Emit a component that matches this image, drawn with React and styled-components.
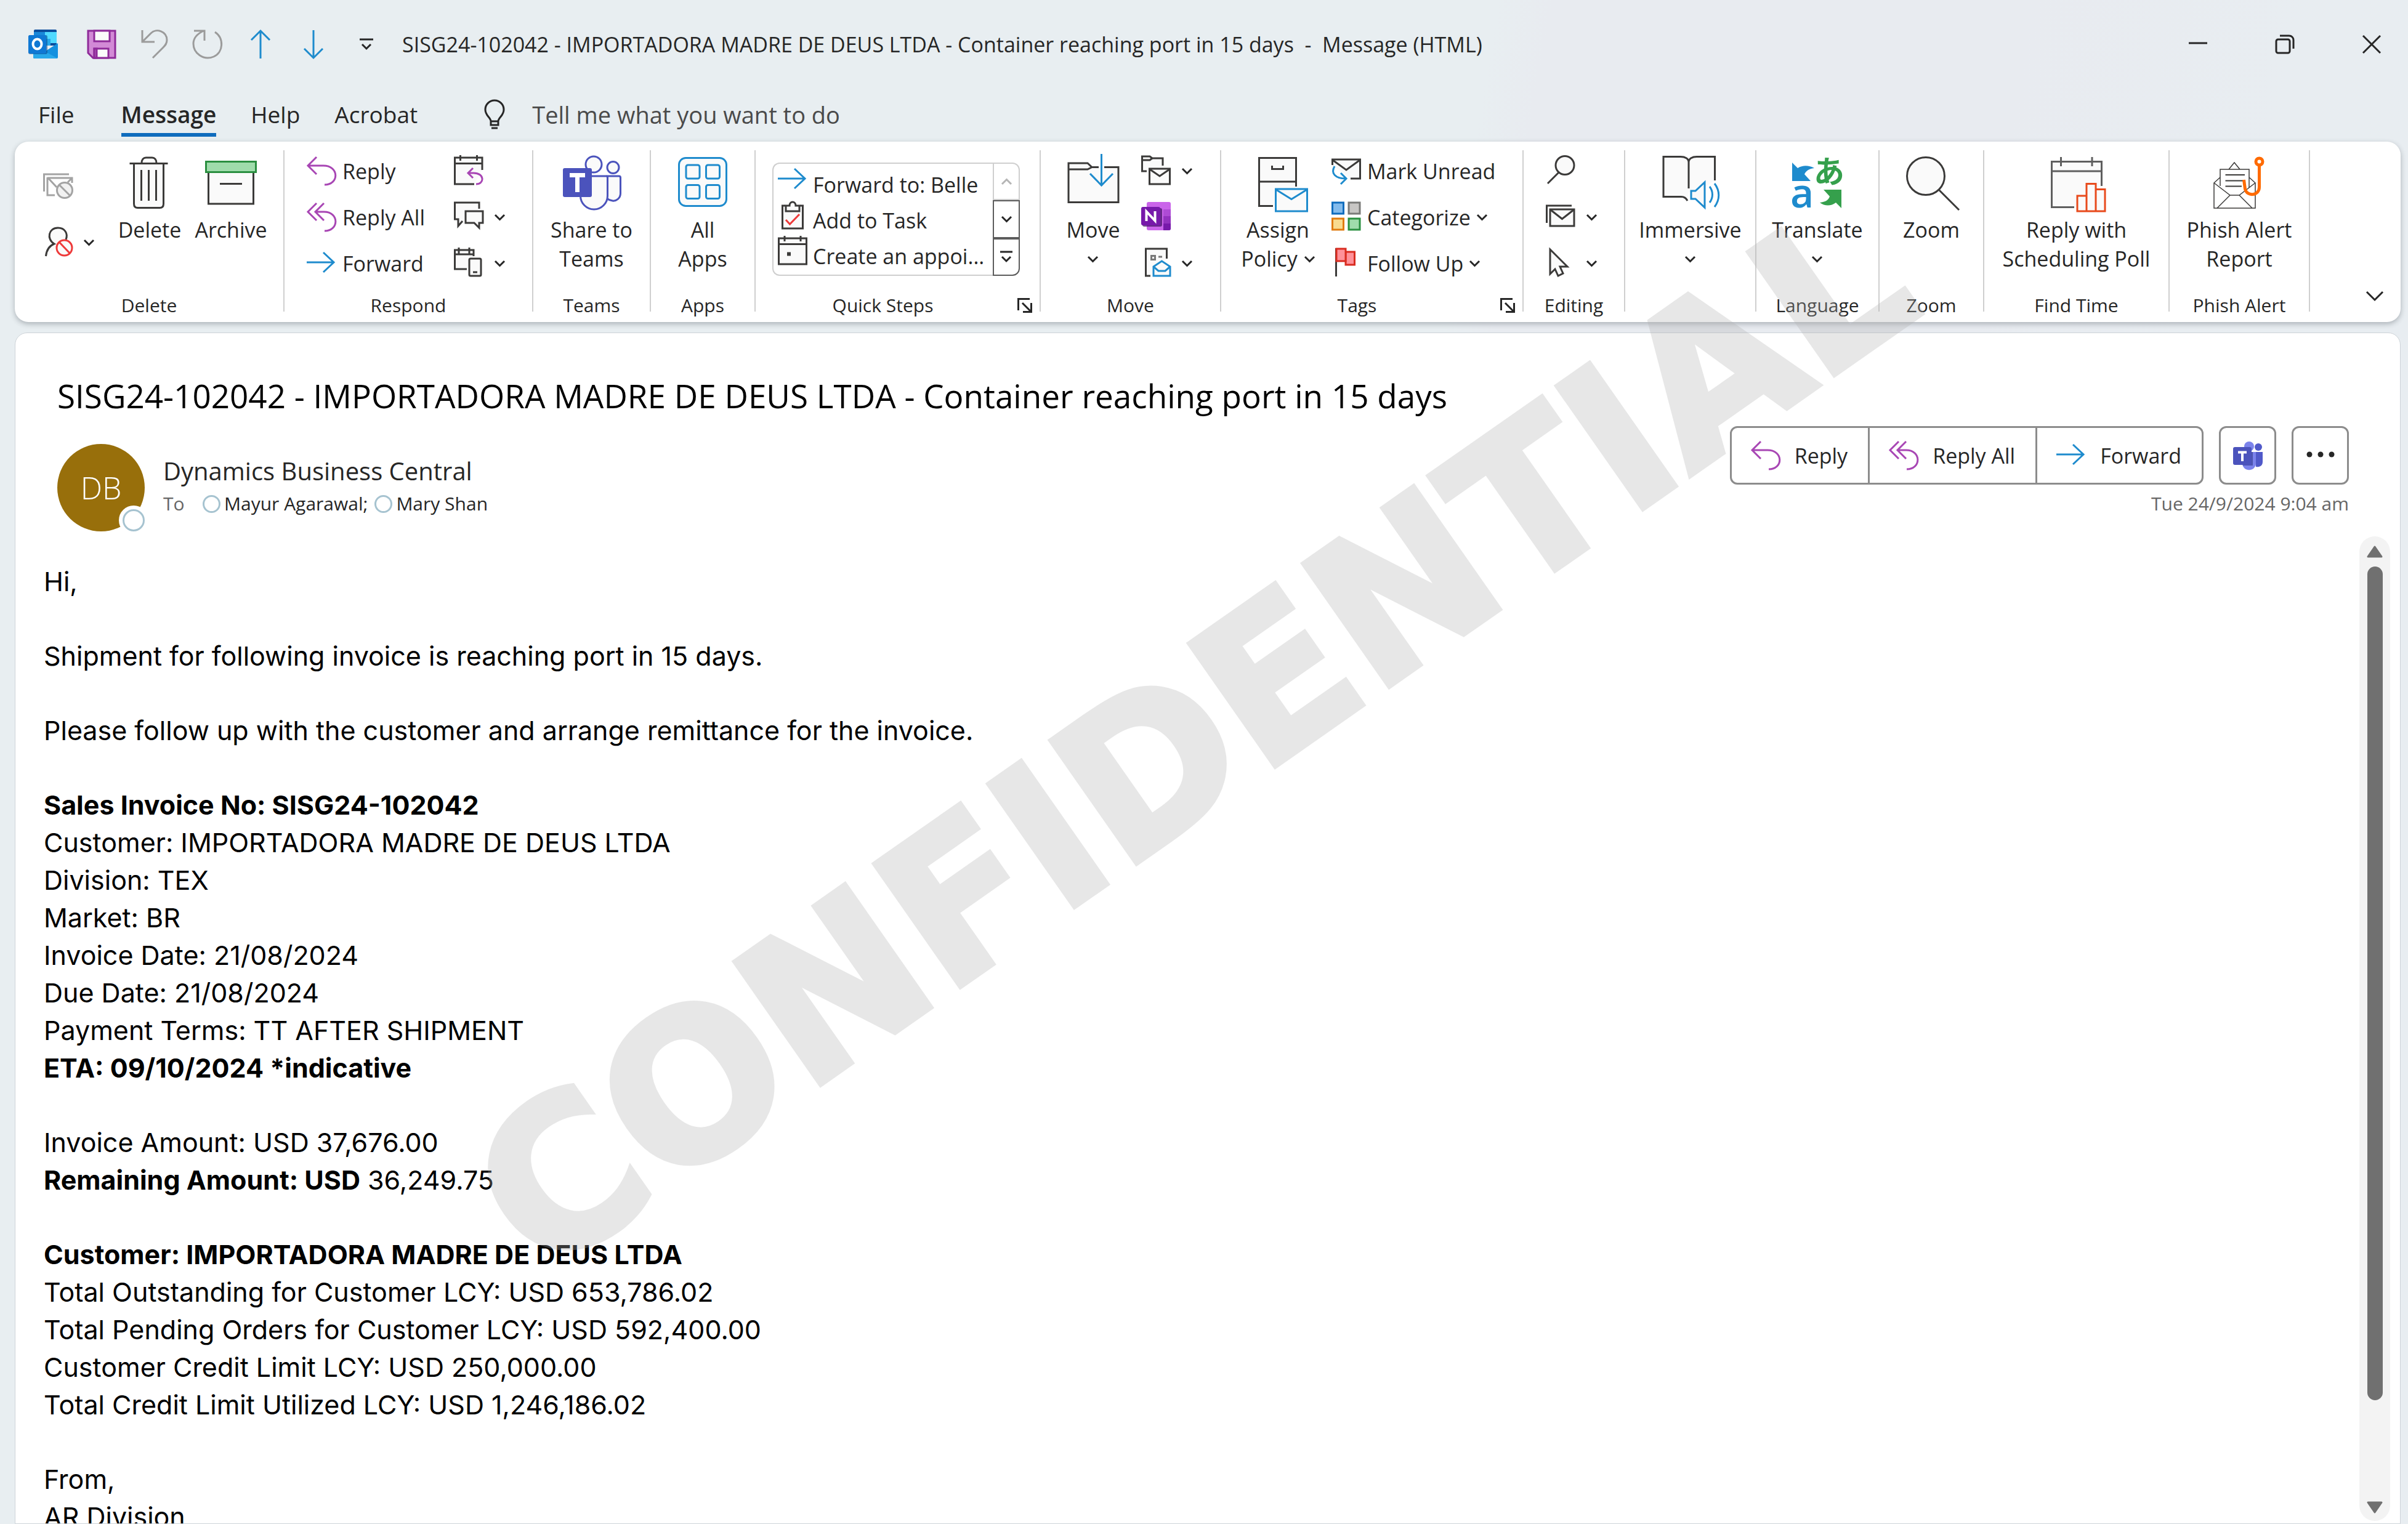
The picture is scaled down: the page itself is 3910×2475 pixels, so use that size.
import React from "react";
import styled, { createGlobalStyle, css } from "styled-components";

const UI = `"Open Sans", "Noto Sans", sans-serif`;
const BODY = `Inter, Roboto, sans-serif`;
const INK = "#262626";
const LINE = "#3b3a39";
const PAPER = "#fafafa";
const BLUE = "#1e8bcd";
const PURPLE = "#a846b4";
const TEAMS = "#4b53bc";

const Global = createGlobalStyle`
  *, *::before, *::after { box-sizing: border-box; }
  body { margin: 0; background: #e8edf1; font-family: ${UI}; color: ${INK}; }
  button, input { font: inherit; color: inherit; background: none; border: 0; padding: 0; margin: 0; }
  svg { display: block; overflow: visible; flex: none; }
  h1, h2, p, ul { margin: 0; padding: 0; font-weight: 400; }
`;

/* ---------- window ---------- */

const Window = styled.div`
  position: relative;
  display: flex;
  flex-direction: column;
  height: 100vh;
  overflow: hidden;
  background: linear-gradient(100deg, #e8eef1 0 56%, #e8ebf0 58% 76%, #e8edf1 86%);
`;

const TitleBar = styled.header`
  display: flex;
  align-items: center;
  height: 144px;
  padding-left: 46px;
`;

const QuickAccess = styled.div`
  display: flex;
  gap: 38px;
  padding-left: 47px;
`;

const IconButton = styled.button`
  display: grid;
  place-items: center;
  width: 48px;
  height: 48px;
`;

const WindowTitle = styled.h1`
  flex: 1;
  padding-left: 34px;
  font-size: 34px;
  line-height: 48px;
  white-space: pre;
`;

const WindowControls = styled.div`
  display: flex;
  gap: 23px;
`;

const ControlButton = styled.button`
  display: grid;
  place-items: center;
  width: 118px;
  height: 96px;
`;

/* ---------- tabs ---------- */

const TabRow = styled.nav`
  display: flex;
  align-items: flex-start;
  gap: 56px;
  padding: 12px 64px 8px 62px;
  font-size: 37px;
`;

const Tab = styled.button`
  height: 66px;
  line-height: 60px;
  border-bottom: 6px solid transparent;
  ${(p) => p.$first && css`margin-right: 20px;`}
  ${(p) => p.$active && css`
    font-weight: 600;
    background: linear-gradient(#0f6cbd, #0f6cbd) bottom / 100% 6px no-repeat border-box;
  `}
`;

const TellMe = styled.label`
  display: flex;
  align-items: center;
  gap: 44px;
  flex: 1;
  padding-left: 52px;
`;

const TellMeInput = styled.input`
  flex: 1;
  height: 60px;
  font-size: 38px;
  outline: none;
  &::placeholder { color: #4a4a4a; opacity: 1; }
`;

/* ---------- ribbon ---------- */

const Ribbon = styled.section`
  display: flex;
  margin: 0 12px 0 24px;
  padding-top: 10px;
  height: 293px;
  background: #fff;
  border-radius: 22px;
  box-shadow: 0 3px 8px rgba(40, 50, 60, 0.32);
`;

const Divider = styled.div`
  width: 2px;
  height: 262px;
  margin-top: 4px;
  background: #cfcfcf;
`;

const Group = styled.div`
  display: flex;
  flex-direction: column;
  width: ${(p) => p.$width}px;
`;

const GroupBody = styled.div`
  display: flex;
  height: 236px;
  padding-left: ${(p) => p.$inset || 0}px;
  gap: ${(p) => p.$gap || 0}px;
`;

const GroupFooter = styled.div`
  display: flex;
  align-items: center;
  height: 40px;
  font-size: 30px;
  line-height: 40px;
`;

const GroupLabel = styled.h2`
  flex: 1;
  font-size: 30px;
  text-align: center;
`;

const Launcher = styled.button`
  display: grid;
  place-items: center;
  width: 48px;
  height: 40px;
`;

const BigButton = styled.button`
  display: flex;
  flex-direction: column;
  align-items: center;
  gap: 8px;
  width: ${(p) => (p.$wide ? "100%" : "132px")};
  padding-top: 12px;
  font-size: 34px;
  line-height: 47px;
`;

const BigLabel = styled.span`
  display: flex;
  flex-direction: column;
  align-items: center;
`;

const LabelLine = styled.span`
  display: flex;
  align-items: center;
  justify-content: center;
  gap: 11px;
  min-height: 47px;
  white-space: nowrap;
`;

const Stack = styled.div`
  display: flex;
  flex-direction: column;
  width: ${(p) => (p.$width ? `${p.$width}px` : "auto")};
  padding-top: ${(p) => (p.$tall ? 16 : 0)}px;
`;

const SmallButton = styled.button`
  display: flex;
  align-items: center;
  gap: 10px;
  height: ${(p) => (p.$tall ? 92 : 75)}px;
  font-size: 34px;
  white-space: nowrap;
  ${(p) => p.$bare && css`gap: 18px;`}
`;

const CollapseButton = styled.button`
  display: grid;
  place-items: center;
  align-self: flex-end;
  width: 60px;
  height: 60px;
  margin: 0 12px 12px auto;
`;

/* ---------- quick steps gallery ---------- */

const Gallery = styled.div`
  display: flex;
  width: 402px;
  height: 184px;
  margin-top: 24px;
`;

const GalleryList = styled.div`
  flex: 1;
  padding: 2px 0 0 7px;
  border: 2px solid #cfcfcf;
  border-right: 0;
  border-radius: 12px 0 0 12px;
`;

const GalleryItem = styled.button`
  display: flex;
  align-items: flex-start;
  gap: 9px;
  height: 58px;
  font-size: 34px;
  line-height: 64px;
  white-space: nowrap;
`;

const GalleryScroll = styled.div`
  display: flex;
  flex-direction: column;
  width: 44px;
`;

const GalleryArrow = styled.button`
  flex: 1;
  display: grid;
  place-items: center;
  border: 2px solid ${(p) => (p.$off ? "#cfcfcf" : "#5c5c5c")};
  &:first-child { border-top-right-radius: 12px; }
  &:last-child { border-bottom-right-radius: 12px; }
`;

/* ---------- message ---------- */

const Message = styled.main`
  display: flex;
  flex-direction: column;
  flex: 1;
  min-height: 0;
  margin: 17px 12px 0 24px;
  background: #fff;
  border: 1px solid #cdd3d8;
  border-radius: 20px 20px 0 0;
`;

const Subject = styled.h2`
  padding: 66px 84px 0 68px;
  font-size: 53px;
  line-height: 72px;
  color: #000;
`;

const MessageHead = styled.div`
  display: flex;
  justify-content: space-between;
  padding: 13px 83px 8px 68px;
`;

const Sender = styled.div`
  display: flex;
  gap: 30px;
  padding-top: 29px;
`;

const Avatar = styled.div`
  position: relative;
  display: grid;
  place-items: center;
  width: 142px;
  height: 142px;
  border-radius: 50%;
  background: #986f0b;
  color: #fff;
  font-size: 50px;
  font-weight: 300;
`;

const Presence = styled.i`
  position: absolute;
  right: -6px;
  bottom: -6px;
  width: 48px;
  height: 48px;
  border: 6px solid #fff;
  border-radius: 50%;
  background: #fff;
  &::after {
    content: "";
    display: block;
    height: 100%;
    border: 3px solid #a6c3d0;
    border-radius: 50%;
  }
`;

const SenderText = styled.div`
  padding-top: 16px;
`;

const SenderName = styled.p`
  font-size: 40px;
  line-height: 56px;
`;

const Recipients = styled.p`
  display: flex;
  align-items: center;
  font-size: 30px;
  line-height: 50px;
`;

const ToLabel = styled.span`
  width: 64px;
  color: #666;
`;

const Person = styled.span`
  display: flex;
  align-items: center;
  gap: 6px;
  margin-right: 11px;
  &::before {
    content: "";
    width: 29px;
    height: 29px;
    border: 3px solid #a6c3d0;
    border-radius: 50%;
  }
`;

const HeadActions = styled.div`
  position: relative;
  z-index: 2;
  display: flex;
  flex-direction: column;
  align-items: flex-end;
  gap: 6px;
`;

const ActionRow = styled.div`
  display: flex;
  gap: 25px;
`;

const ActionGroup = styled.div`
  display: flex;
  height: 95px;
  background: #fff;
  border: 3px solid #8c8c8c;
  border-radius: 12px;
`;

const Action = styled.button`
  display: flex;
  align-items: center;
  gap: 23px;
  padding: 0 33px 0 31px;
  font-size: 34px;
  & + & { border-left: 3px solid #8c8c8c; }
`;

const SquareAction = styled.button`
  display: grid;
  place-items: center;
  width: 93px;
  height: 95px;
  background: #fff;
  border: 3px solid #8c8c8c;
  border-radius: 12px;
`;

const Sent = styled.time`
  font-size: 30px;
  line-height: 50px;
  color: #666;
`;

const Reading = styled.div`
  display: flex;
  flex: 1;
  min-height: 0;
  padding-right: 16px;
`;

const MailBody = styled.article`
  flex: 1;
  overflow: hidden;
  padding: 43px 0 0 46px;
  font-family: ${BODY};
  font-size: 43px;
  line-height: 61px;
  color: #000;
`;

const Paragraph = styled.p`
  margin-bottom: 60px;
`;

const Row = styled.span`
  display: block;
`;

const ScrollTrack = styled.div`
  display: flex;
  flex-direction: column;
  align-items: center;
  justify-content: space-between;
  gap: 14px;
  width: 50px;
  margin-bottom: 4px;
  padding: 15px 0 12px;
  border-radius: 25px;
  background: #f3f3f3;
`;

const ThumbLane = styled.div`
  flex: 1;
`;

const Thumb = styled.div`
  width: 25px;
  height: 90%;
  border-radius: 13px;
  background: #707070;
`;

const Watermark = styled.div`
  position: absolute;
  z-index: 1;
  left: 50%;
  top: 50%;
  font: bold 331px/1 "DejaVu Sans", sans-serif;
  color: #b2b2b2;
  -webkit-text-stroke: 10px #b2b2b2;
  opacity: 0.3;
  transform: translate(-50%, -50%) translate(-18px, -41px) rotate(-35deg);
  pointer-events: none;
  user-select: none;
`;

/* ---------- icons ---------- */

const S = ({ size = 48, children, stroke = LINE, w = 3 }) => (
  <svg width={size} height={size} viewBox={`0 0 ${size} ${size}`} fill="none" stroke={stroke} strokeWidth={w} aria-hidden="true">{children}</svg>
);
const L = ({ children, stroke = LINE, w = 3 }) => (
  <svg width="96" height="90" viewBox="0 0 96 90" fill="none" stroke={stroke} strokeWidth={w} aria-hidden="true">{children}</svg>
);

const Chevron = ({ up, color = INK }) => (
  <svg width="17" height="10" viewBox="0 0 17 10" fill="none" stroke={color} strokeWidth="3" aria-hidden="true">
    <path d={up ? "M1 9l7.5-7.5L16 9" : "M1 1l7.5 7.5L16 1"} />
  </svg>
);

const OutlookIcon = () => (
  <S stroke="none">
    <path d="M11 0h33a2 2 0 0 1 2 2v24H9V2a2 2 0 0 1 2-2z" fill="#0a4c9c" />
    <path d="M9 4h18v11H9z" fill="#1988d9" /><path d="M27 4h19v18H27z" fill="#50d9ff" />
    <path d="M9 15h18v11H9z" fill="#0f5fae" /><path d="M27 15h9v11h-9z" fill="#28a8ea" />
    <path d="M48 22L28 35 8 24v21a2 2 0 0 0 2 2h36a2 2 0 0 0 2-2z" fill="#1490df" />
    <path d="M8 25l39 21.500c-.500.500-1 .500-2 .500H10a2 2 0 0 1-2-2z" fill="#28a8ea" />
    <rect x="0" y="9" width="31" height="31" rx="3" fill="#0a4a8c" opacity=".6" />
    <rect x="0" y="9" width="29" height="30" rx="3" fill="#0f78d4" />
    <ellipse cx="14.500" cy="23.500" rx="7" ry="8" fill="none" stroke="#fff" strokeWidth="4" />
  </S>
);
const SaveIcon = () => (
  <S stroke="#8e2a99">
    <path d="M2 2h44v44H10l-8-8z" fill="#d28ad6" />
    <path d="M12 2h25v17H12z" fill="#fafafa" /><path d="M12 46V31h23v15z" fill="#fafafa" />
    <path d="M12 31h4v15h-4z" fill="#b35cbb" />
  </S>
);
const UndoIcon = () => (
  <S stroke="#9b9b9b"><path d="M4 1v19h20M4 20L18 6c9-9 26-3 26 11 0 6-3 9-6 12L21 46" /></S>
);
const RedoIcon = () => (
  <S stroke="#9b9b9b"><path d="M2 2h17v16M36 4c15 10 14 33-2 40-17 7-33-6-33-21C1 13 9 6 18 2" /></S>
);
const UpIcon = () => <S stroke={BLUE}><path d="M24 47V2M9 17L24 2l15 15" /></S>;
const DownIcon = () => <S stroke={BLUE}><path d="M24 1v45M9 31l15 15 15-15" /></S>;
const CustomizeIcon = () => <S stroke={INK}><path d="M13 16h22" /><path d="M17 24l7 7 7-7" /></S>;
const BulbIcon = () => (
  <svg width="34" height="48" viewBox="0 0 34 48" fill="none" stroke={INK} strokeWidth="3" aria-hidden="true">
    <path d="M11 41v-6c0-6-9-9-9-19a15 15 0 0 1 30 0c0 10-9 13-9 19v6zM11 35h12M12 46h10" />
  </svg>
);
const MinIcon = () => <S size={32} stroke={INK}><path d="M1 14h30" /></S>;
const RestoreIcon = () => (
  <S size={32} stroke={INK}><rect x="2" y="8" width="22" height="22" rx="3" /><path d="M8 2h15a7 7 0 0 1 7 7v14" /></S>
);
const CloseIcon = () => <S size={32} stroke={INK}><path d="M2 2l28 28M30 2L2 30" /></S>;

const JunkMailIcon = () => (
  <S stroke="#a3a3a3">
    <path d="M1.500 33V5H42" /><path d="M7 11h40v8M7 10v29h12M9 12l13 14M46 12l-6 6" />
    <circle cx="35" cy="31" r="12.500" fill="#f1f1f1" /><path d="M26 22l18 18" />
  </S>
);
const BlockPersonIcon = () => (
  <S>
    <path d="M4.500 46c1-10 6-17 13.500-20C5 18 9 0 24 0c11 0 17 9 13 19" fill={PAPER} />
    <circle cx="34.500" cy="32.500" r="12.500" fill={PAPER} stroke="#ee3a3a" /><path d="M26 23l17 18" stroke="#ee3a3a" />
  </S>
);
const TrashIcon = () => (
  <L>
    <path d="M22.500 14v65c0 4 2 6.500 6 6.500h36c4 0 6-2.500 6-6.500V14" fill={PAPER} />
    <path d="M15.500 13.500h62M35 13c0-6 3-9 7-9h10c4 0 7 3 7 9M34.500 24v50M46.500 24v50M58.500 24v50" />
  </L>
);
const ArchiveIcon = () => (
  <L>
    <path d="M11.500 27v52h73V27" fill={PAPER} /><path d="M30 46.500h36" />
    <rect x="7.500" y="10.500" width="81" height="17" fill="#9fdcab" stroke="#2a8f40" />
  </L>
);
const ReplyIcon = () => <S stroke={PURPLE}><path d="M16 1L2 15l14 14M2 15h25c26 0 26 31 2 31" /></S>;
const ReplyAllIcon = () => (
  <S stroke={PURPLE}><path d="M16 1L2 15l14 14M28 1L14 15l14 14M14 15h14c25 0 25 31 1 31" /></S>
);
const ForwardIcon = () => <S stroke={BLUE}><path d="M0 22h44M27 6l17 16-17 16" /></S>;
const MeetingReplyIcon = () => (
  <S>
    <path d="M46 22V2H1.500v43H33" fill={PAPER} /><path d="M1 11.500h45M10.500-2v9M37.500-2v9" />
    <path d="M31 19l-8 8 8 8M23 27h9c18 0 18 18 4 18" stroke={PURPLE} />
  </S>
);
const ChatIcon = () => (
  <S>
    <path d="M41 10V0H1.500v27H7v11l7-8" fill={PAPER} />
    <path d="M19 14h28v19h-6v8l-8-8H19z" fill={PAPER} />
  </S>
);
const MeetingPhoneIcon = () => (
  <S>
    <path d="M32 12V2H1.500v31H21" fill={PAPER} /><path d="M1 9h31M8-2v10M25-2v10" />
    <rect x="25" y="16" width="19" height="28" rx="2" fill={PAPER} /><path d="M31 38h7" />
  </S>
);
const TeamsIcon = () => (
  <L stroke={TEAMS}>
    <circle cx="51" cy="15" r="13" fill={PAPER} /><circle cx="82.500" cy="20" r="9.500" fill={PAPER} />
    <path d="M73 34h19c1.500 0 2.500 1 2.500 2.500V62c0 8-7 13-13 12-4-.500-7-2-9-4z" fill={PAPER} />
    <path d="M40 34h31c1.500 0 2.500 1 2.500 2.500V66a22 22 0 0 1-44 0V50z" fill={PAPER} />
    <rect x="1" y="21" width="47" height="47" rx="3" fill={TEAMS} stroke="none" />
    <path d="M12 32.500h25M24.500 32v28" stroke="#fff" strokeWidth="7" />
  </L>
);
const AppsIcon = () => (
  <L stroke={BLUE}>
    <rect x="9.500" y="4.500" width="77" height="78" rx="11" fill={PAPER} />
    {[[21, 16], [53.5, 16], [21, 48.5], [53.5, 48.5]].map(([x, y]) => (
      <rect key={`${x}-${y}`} x={x} y={y} width="22" height="22" rx="3" fill={PAPER} />
    ))}
  </L>
);
const ClipboardIcon = () => (
  <S>
    <path d="M12 8H7.500v37h33V8H36" fill={PAPER} />
    <path d="M13 17V8h6c0-8 10-8 10 0h6v9z" fill={PAPER} />
    <path d="M13 31l6.500 7L35 22" stroke="#ee3a3a" />
  </S>
);
const AppointmentIcon = () => (
  <S><rect x="1.500" y="3" width="45" height="42" fill={PAPER} /><path d="M1 12.500h45M11-1v9M37-1v9" /><path d="M15 28.500h6" strokeWidth="6" /></S>
);
const MoveIcon = () => (
  <L>
    <path d="M8 76.500V13h31l7 6.500h43v57z" fill={PAPER} stroke="none" />
    <path d="M57 19.500H46L39 13H8v63.500h81v-57H66M8 23h31l7-3.500" />
    <path d="M61.500-2v50M43 30l18.500 19L80 30" stroke={BLUE} />
  </L>
);
const FolderMailIcon = () => (
  <S>
    <path d="M9 24H1.500V0H14l4 3h17v12" fill={PAPER} /><path d="M1 6h13l4-3" />
    <rect x="13.500" y="20" width="33" height="25" fill={PAPER} /><path d="M14 21l16 11 16-11" />
  </S>
);
const OneNoteIcon = () => (
  <S stroke="none">
    <rect x="9" y="-1" width="39" height="46" rx="3" fill="#ca64ea" />
    <path d="M36 11h12v11H36z" fill="#ae4bd5" /><path d="M36 22h12v12H36z" fill="#9332bf" />
    <path d="M36 34h12v8a3 3 0 0 1-3 3h-9z" fill="#7719aa" />
    <rect x="2" y="9" width="32" height="30" rx="3" fill="#3c0f5c" opacity=".7" />
    <rect x="0" y="7" width="31" height="30" rx="3" fill="#7719aa" />
    <path d="M8.500 30V14.500l14 15V14" fill="none" stroke="#fff" strokeWidth="4" />
  </S>
);
const RulesIcon = () => (
  <S>
    <path d="M15 44H7.500V0h34v16" fill={PAPER} /><rect x="16.500" y="11.500" width="6" height="6" stroke="#777" /><path d="M28 13h6" stroke="#777" />
    <path d="M20 29l13.500-9L47 29v15H20z" fill={PAPER} stroke={BLUE} /><path d="M20 29l8 7h11l8-7" stroke={BLUE} />
  </S>
);
const PolicyIcon = () => (
  <L>
    <path d="M40 82.500H17.500v-78h60V51" fill={PAPER} /><path d="M17 43h61M38.500 17v5.500h18V17" />
    <rect x="44.500" y="55" width="51" height="36" fill={PAPER} stroke={BLUE} /><path d="M45 56l25 15.500L95 56" stroke={BLUE} />
  </L>
);
const UnreadIcon = () => (
  <S>
    <path d="M1.500 14V5h45v31H31" fill={PAPER} /><path d="M2 6l22 16L46 6" />
    <path d="M5 16c-7 12 2 20 18 20M15 27l9 9-9 9" stroke={BLUE} />
  </S>
);
const CategorizeIcon = () => (
  <S>
    <rect x="1.500" y="0" width="18" height="18" fill="#83bbec" stroke="#0f6cbd" />
    <rect x="28" y="0" width="18" height="18" fill="#c8c6c4" stroke="#7a7a78" />
    <rect x="1.500" y="26" width="18" height="18" fill="#f8db8f" stroke="#e07c10" />
    <rect x="28" y="26" width="18" height="18" fill="#9fdcab" stroke="#2a8f40" />
  </S>
);
const FlagIcon = () => (
  <S>
    <path d="M7.500-1v46" /><path d="M23 5h14.500v21H23z" fill="#ff9199" stroke="#d92c20" /><path d="M8 0h15v20H8z" fill="#ff9199" stroke="#d92c20" />
  </S>
);
const FindIcon = () => <S><circle cx="31" cy="14.500" r="15" fill={PAPER} /><path d="M21 26L3 44" /></S>;
const RelatedIcon = () => (
  <S><path d="M1.500 33V5H42" /><rect x="7" y="11" width="39" height="27" fill={PAPER} /><path d="M8 12l18.500 14.500L45 12" /></S>
);
const PointerIcon = () => <S><path d="M7 1v40l8-8 5 11 8-4-5-11h12z" fill={PAPER} /></S>;
const ImmersiveIcon = () => (
  <L>
    <path d="M43 74c-2-4-5-6.500-10-6.500H4v-65h28c7 0 13 3 13 8 0-5 6-8 13-8h29V41L60 60H45z" fill={PAPER} stroke="none" />
    <path d="M43 74c-2-4-5-6.500-10-6.500H4v-65h28c7 0 13 3 13 9V54M45 11.500c0-6 6-9 13-9h29.500V41" />
    <path d="M49 58h7l15-14v41L56 71h-7z" fill={PAPER} stroke={BLUE} />
    <path d="M79 51c6 8 6 18 0 26M87 46c9 12 9 26 0 38" stroke={BLUE} />
  </L>
);
const GlyphText = styled.text`
  font-family: ${(p) => (p.$cjk ? `"Noto Sans CJK JP"` : `"Open Sans"`)}, sans-serif;
  font-size: ${(p) => (p.$cjk ? 50 : 66)}px;
  font-weight: ${(p) => (p.$cjk ? 700 : 600)};
  stroke: none;
`;
const TranslateIcon = () => (
  <L stroke="none">
    <path d="M7 12l9 9c8-5 18-5 27 0-9 1-14 5-16 10l10 11H7z" fill={BLUE} />
    <path d="M58 56h29v30l-9-9c-8 6-18 6-26 0 9-1 14-4 16-10z" fill="#35a04c" />
    <GlyphText $cjk x="42" y="45" fill="#35a04c">あ</GlyphText>
    <GlyphText x="4" y="85" fill={BLUE}>a</GlyphText>
  </L>
);
const ZoomIcon = () => <L><circle cx="39" cy="34" r="30.500" fill={PAPER} /><path d="M60 56l33 33" /></L>;
const PollIcon = () => (
  <L stroke="#5f5f5f">
    <path d="M44 84.500H7.500V10.500h81V50" fill={PAPER} /><path d="M7 26h81M22.500 3v15M73 3v15" />
    <path d="M49 91V66h15v25zM64 91V46.500h15V91zM79 91V55.500h15V91z" fill={PAPER} stroke="#e84a1c" />
  </L>
);
const PhishIcon = () => (
  <L w="1">
    <path d="M31 23l9-11 9 11M17 36L7 45v41h67V45l-10-9M17 50V23h47v30" strokeWidth="1.500" />
    <path d="M7 45l26 20h15l26-20M12 86l21-21M69 86L48 65" strokeWidth="1.500" />
    <path d="M25.500 32H57M25.500 41.500H54M25.500 50.500H52" strokeWidth="2" />
    <circle cx="80.500" cy="10.500" r="5.500" stroke="#ff6a00" strokeWidth="5" />
    <path d="M80.500 17v35c0 14-20 16-23 3l-2-15" stroke="#ff6a00" strokeWidth="5" />
  </L>
);
const LauncherIcon = () => (
  <svg width="24" height="24" viewBox="0 0 24 24" fill="none" stroke={INK} strokeWidth="3" aria-hidden="true"><path d="M1.500 20V1.500H20M8 8l14 14M22.500 8v14.500H9" /></svg>
);
const MoreRowsIcon = () => (
  <svg width="22" height="22" viewBox="0 0 22 22" fill="none" stroke={INK} strokeWidth="3" aria-hidden="true"><path d="M1 3h20M4 11l7 7 7-7" /></svg>
);
const CollapseIcon = () => (
  <svg width="30" height="18" viewBox="0 0 30 18" fill="none" stroke={INK} strokeWidth="3" aria-hidden="true"><path d="M2 2l13 13L28 2" /></svg>
);
const TeamsColorIcon = () => (
  <S stroke="none">
    <circle cx="26" cy="9" r="8" fill="#7b83eb" /><circle cx="41" cy="10" r="6" fill="#5059c9" />
    <path d="M34 18h14v16c0 7-6 9-11 8z" fill="#5059c9" /><path d="M15 18h22v18c0 15-22 15-22 0z" fill="#7b83eb" />
    <path d="M13 18h19v22H16z" fill="#2f3785" opacity=".6" />
    <rect x="0" y="10" width="30" height="29" rx="3" fill={TEAMS} />
    <path d="M8 18.500h14M15 18v15" stroke="#fff" strokeWidth="4" />
  </S>
);
const DotsIcon = () => (
  <S stroke="none"><g fill={INK}><circle cx="6" cy="22" r="4.500" /><circle cx="24" cy="22" r="4.500" /><circle cx="42" cy="22" r="4.500" /></g></S>
);
const ScrollArrow = ({ down }) => (
  <svg width="26" height="20" viewBox="0 0 26 20" fill="#707070" stroke="#707070" strokeWidth="3" strokeLinejoin="round" aria-hidden="true">
    <path d={down ? "M2 2h22L13 18z" : "M2 18h22L13 2z"} />
  </svg>
);

/* ---------- pieces ---------- */

function RibbonGroup({ label, width, inset, gap, launcher, children }) {
  return (
    <>
      <Group $width={width}>
        <GroupBody $inset={inset} $gap={gap}>{children}</GroupBody>
        <GroupFooter>
          {label && <GroupLabel>{label}</GroupLabel>}
          {launcher && <Launcher aria-label={`${label} options`}><LauncherIcon /></Launcher>}
        </GroupFooter>
      </Group>
      <Divider />
    </>
  );
}

function Big({ icon, lines, menu, wide }) {
  return (
    <BigButton $wide={wide}>
      {icon}
      <BigLabel>
        {lines.map((t, i) => (
          <LabelLine key={t}>{t}{menu === "inline" && i === lines.length - 1 && <Chevron />}</LabelLine>
        ))}
        {menu === "below" && <LabelLine><Chevron /></LabelLine>}
      </BigLabel>
    </BigButton>
  );
}

function Small({ icon, label, name, menu, tall }) {
  return (
    <SmallButton $tall={tall} $bare={!label} aria-label={name}>
      {icon}{label}{menu && <Chevron />}
    </SmallButton>
  );
}

const TABS = ["File", "Message", "Help", "Acrobat"];
const QUICK = [
  ["Save", <SaveIcon />], ["Undo", <UndoIcon />], ["Redo", <RedoIcon />],
  ["Previous item", <UpIcon />], ["Next item", <DownIcon />], ["Customize toolbar", <CustomizeIcon />],
];
const SUBJECT = "SISG24-102042 - IMPORTADORA MADRE DE DEUS LTDA - Container reaching port in 15 days";
const MAIL = [
  ["Hi,"],
  ["Shipment for following invoice is reaching port in 15 days."],
  ["Please follow up with the customer and arrange remittance for the invoice."],
  [
    <b>Sales Invoice No: SISG24-102042</b>,
    "Customer: IMPORTADORA MADRE DE DEUS LTDA",
    "Division: TEX",
    "Market: BR",
    "Invoice Date: 21/08/2024",
    "Due Date: 21/08/2024",
    "Payment Terms: TT AFTER SHIPMENT",
    <b>ETA: 09/10/2024 *indicative</b>,
  ],
  ["Invoice Amount: USD 37,676.00", <><b>Remaining Amount: USD</b> 36,249.75</>],
  [
    <b>Customer: IMPORTADORA MADRE DE DEUS LTDA</b>,
    "Total Outstanding for Customer LCY: USD 653,786.02",
    "Total Pending Orders for Customer LCY: USD 592,400.00",
    "Customer Credit Limit LCY: USD 250,000.00",
    "Total Credit Limit Utilized LCY: USD 1,246,186.02",
  ],
  ["From,", "AR Division"],
];

export default function App() {
  return (
    <>
      <Global />
      <Window>
        <TitleBar>
          <OutlookIcon />
          <QuickAccess>
            {QUICK.map(([name, icon]) => <IconButton key={name} aria-label={name}>{icon}</IconButton>)}
          </QuickAccess>
          <WindowTitle>{SUBJECT + "  -  Message (HTML)"}</WindowTitle>
          <WindowControls>
            <ControlButton aria-label="Minimize"><MinIcon /></ControlButton>
            <ControlButton aria-label="Restore"><RestoreIcon /></ControlButton>
            <ControlButton aria-label="Close"><CloseIcon /></ControlButton>
          </WindowControls>
        </TitleBar>

        <TabRow>
          {TABS.map((t) => <Tab key={t} $first={t === "File"} $active={t === "Message"}>{t}</Tab>)}
          <TellMe>
            <BulbIcon />
            <TellMeInput type="text" aria-label="Tell me what you want to do" placeholder="Tell me what you want to do" />
          </TellMe>
        </TabRow>

        <Ribbon>
          <RibbonGroup label="Delete" width={436} inset={46}>
            <Stack $width={107} $tall>
              <Small tall name="Ignore" icon={<JunkMailIcon />} />
              <Small tall name="Junk" menu icon={<BlockPersonIcon />} />
            </Stack>
            <Big icon={<TrashIcon />} lines={["Delete"]} />
            <Big icon={<ArchiveIcon />} lines={["Archive"]} />
          </RibbonGroup>
          <RibbonGroup label="Respond" width={402} inset={36}>
            <Stack $width={239}>
              <Small icon={<ReplyIcon />} label="Reply" />
              <Small icon={<ReplyAllIcon />} label="Reply All" />
              <Small icon={<ForwardIcon />} label="Forward" />
            </Stack>
            <Stack>
              <Small name="Meeting" icon={<MeetingReplyIcon />} />
              <Small name="IM" menu icon={<ChatIcon />} />
              <Small name="More" menu icon={<MeetingPhoneIcon />} />
            </Stack>
          </RibbonGroup>
          <RibbonGroup label="Teams" width={189}><Big wide icon={<TeamsIcon />} lines={["Share to", "Teams"]} /></RibbonGroup>
          <RibbonGroup label="Apps" width={168}><Big wide icon={<AppsIcon />} lines={["All", "Apps"]} /></RibbonGroup>
          <RibbonGroup label="Quick Steps" width={461} inset={27} launcher>
            <Gallery>
              <GalleryList>
                <GalleryItem><ForwardIcon />Forward to: Belle</GalleryItem>
                <GalleryItem><ClipboardIcon />Add to Task</GalleryItem>
                <GalleryItem><AppointmentIcon />Create an appoi...</GalleryItem>
              </GalleryList>
              <GalleryScroll>
                <GalleryArrow $off aria-label="Previous row"><Chevron up color="#b5b5b5" /></GalleryArrow>
                <GalleryArrow aria-label="Next row"><Chevron /></GalleryArrow>
                <GalleryArrow aria-label="All quick steps"><MoreRowsIcon /></GalleryArrow>
              </GalleryScroll>
            </Gallery>
          </RibbonGroup>
          <RibbonGroup label="Move" width={291} inset={19} gap={12}>
            <Big icon={<MoveIcon />} lines={["Move"]} menu="below" />
            <Stack>
              <Small name="Rules" menu icon={<FolderMailIcon />} />
              <Small name="OneNote" icon={<OneNoteIcon />} />
              <Small name="Actions" menu icon={<RulesIcon />} />
            </Stack>
          </RibbonGroup>
          <RibbonGroup label="Tags" width={489} inset={26} gap={21} launcher>
            <Big icon={<PolicyIcon />} lines={["Assign", "Policy"]} menu="inline" />
            <Stack>
              <Small icon={<UnreadIcon />} label="Mark Unread" />
              <Small icon={<CategorizeIcon />} label="Categorize" menu />
              <Small icon={<FlagIcon />} label="Follow Up" menu />
            </Stack>
          </RibbonGroup>
          <RibbonGroup label="Editing" width={163} inset={36}>
            <Stack>
              <Small name="Find" icon={<FindIcon />} />
              <Small name="Related" menu icon={<RelatedIcon />} />
              <Small name="Select" menu icon={<PointerIcon />} />
            </Stack>
          </RibbonGroup>
          <RibbonGroup width={211}><Big wide icon={<ImmersiveIcon />} lines={["Immersive"]} menu="below" /></RibbonGroup>
          <RibbonGroup label="Language" width={198}><Big wide icon={<TranslateIcon />} lines={["Translate"]} menu="below" /></RibbonGroup>
          <RibbonGroup label="Zoom" width={168}><Big wide icon={<ZoomIcon />} lines={["Zoom"]} /></RibbonGroup>
          <RibbonGroup label="Find Time" width={299}><Big wide icon={<PollIcon />} lines={["Reply with", "Scheduling Poll"]} /></RibbonGroup>
          <RibbonGroup label="Phish Alert" width={226}><Big wide icon={<PhishIcon />} lines={["Phish Alert", "Report"]} /></RibbonGroup>
          <CollapseButton aria-label="Collapse the ribbon"><CollapseIcon /></CollapseButton>
        </Ribbon>

        <Message>
          <Subject>{SUBJECT}</Subject>
          <MessageHead>
            <Sender>
              <Avatar>DB<Presence /></Avatar>
              <SenderText>
                <SenderName>Dynamics Business Central</SenderName>
                <Recipients><ToLabel>To</ToLabel><Person>Mayur Agarawal;</Person><Person>Mary Shan</Person></Recipients>
              </SenderText>
            </Sender>
            <HeadActions>
              <ActionRow>
                <ActionGroup>
                  <Action><ReplyIcon />Reply</Action>
                  <Action><ReplyAllIcon />Reply All</Action>
                  <Action><ForwardIcon />Forward</Action>
                </ActionGroup>
                <SquareAction aria-label="Share to Teams"><TeamsColorIcon /></SquareAction>
                <SquareAction aria-label="More actions"><DotsIcon /></SquareAction>
              </ActionRow>
              <Sent>Tue 24/9/2024 9:04 am</Sent>
            </HeadActions>
          </MessageHead>
          <Reading>
            <MailBody>
              {MAIL.map((rows, i) => (
                <Paragraph key={i}>{rows.map((r, j) => <Row key={j}>{r}</Row>)}</Paragraph>
              ))}
            </MailBody>
            <ScrollTrack>
              <ScrollArrow />
              <ThumbLane><Thumb /></ThumbLane>
              <ScrollArrow down />
            </ScrollTrack>
          </Reading>
        </Message>
        <Watermark>CONFIDENTIAL</Watermark>
      </Window>
    </>
  );
}
